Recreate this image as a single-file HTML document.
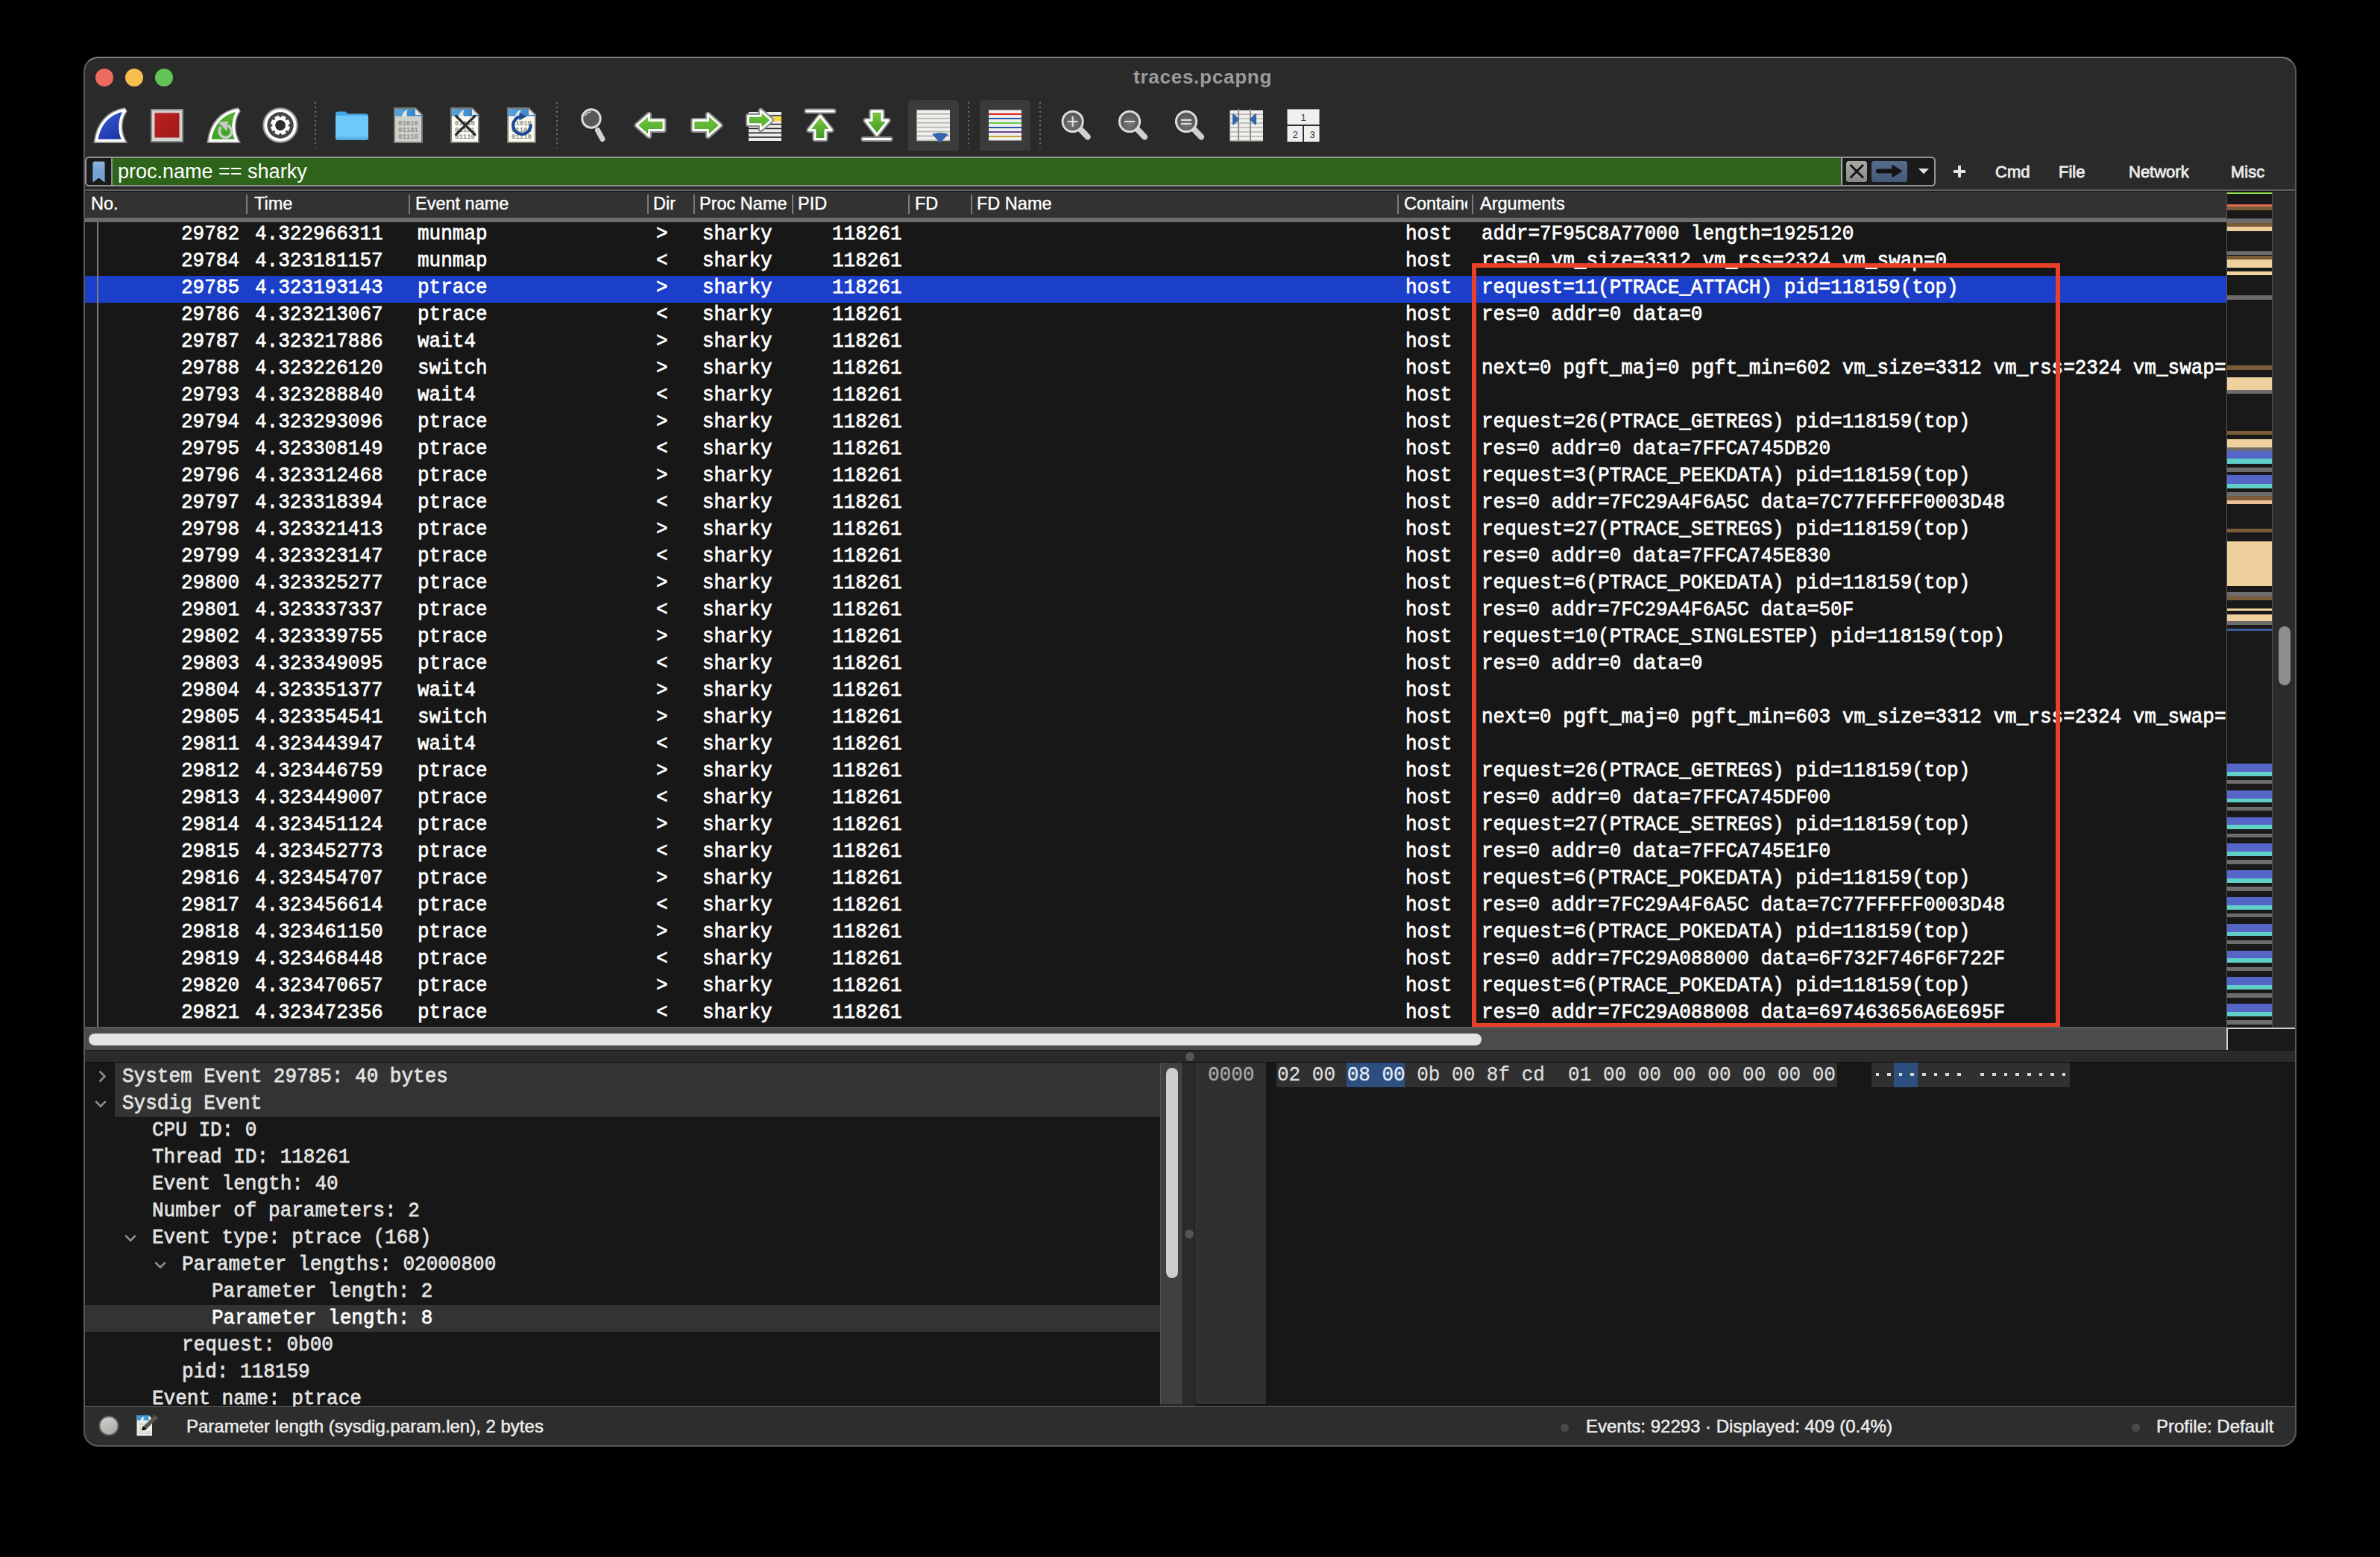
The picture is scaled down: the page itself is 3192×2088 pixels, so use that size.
<!DOCTYPE html><html><head><meta charset="utf-8"><title>traces.pcapng</title><style>
*{margin:0;padding:0;box-sizing:border-box}
html,body{width:3192px;height:2088px;background:#000;overflow:hidden}
body{position:relative;font-family:"Liberation Sans", sans-serif}
.a{position:absolute}
.m{position:absolute;font-family:"Liberation Mono", monospace;font-size:26px;line-height:36px;white-space:pre;color:#fff;transform:scaleY(1.08);transform-origin:0 24.9px;-webkit-text-stroke:0.7px}
.s{position:absolute;font-family:"Liberation Sans", sans-serif;white-space:pre}
.hd{position:absolute;font-family:"Liberation Sans", sans-serif;font-size:23.5px;line-height:34px;color:#fff;white-space:pre;top:256px;-webkit-text-stroke:0.4px}
.sep{position:absolute;width:2px;top:261px;height:26px;background:#7c7c7c}
</style></head><body>
<div class="a" style="left:0;top:0;width:3192px;height:2088px;clip-path:inset(76px 112px 148px 112px round 20px);background:#2a2a2a">
<div class="a" style="left:128px;top:92px;width:24px;height:24px;border-radius:50%;background:#ee6a5f"></div>
<div class="a" style="left:168px;top:92px;width:24px;height:24px;border-radius:50%;background:#f5be4f"></div>
<div class="a" style="left:208px;top:92px;width:24px;height:24px;border-radius:50%;background:#61c454"></div>
<div class="s" style="left:1520px;top:87px;font-size:26px;line-height:32px;font-weight:bold;color:#9b9b9b;letter-spacing:0.75px">traces.pcapng</div>
<svg class="a" style="left:0;top:0" width="3192" height="260" viewBox="0 0 3192 260"><defs>
<linearGradient id="blu" x1="0" y1="0" x2="0.6" y2="1"><stop offset="0" stop-color="#6680e6"/><stop offset="0.45" stop-color="#2f4cc4"/><stop offset="1" stop-color="#1c36a8"/></linearGradient>
<linearGradient id="grnfin" x1="0" y1="0" x2="0.3" y2="1"><stop offset="0" stop-color="#5dbb3a"/><stop offset="1" stop-color="#3f9f24"/></linearGradient>
<linearGradient id="red" x1="0" y1="0" x2="1" y2="1"><stop offset="0" stop-color="#b92226"/><stop offset="1" stop-color="#a31a14"/></linearGradient>
<linearGradient id="grn" x1="0" y1="0" x2="0" y2="1"><stop offset="0" stop-color="#78c544"/><stop offset="1" stop-color="#4aa82a"/></linearGradient>
<linearGradient id="grnv" x1="0" y1="0" x2="0" y2="1"><stop offset="0" stop-color="#7cc646"/><stop offset="1" stop-color="#3f9a22"/></linearGradient>
<linearGradient id="docblue" x1="0" y1="0" x2="1" y2="0"><stop offset="0" stop-color="#5aa6dc"/><stop offset="1" stop-color="#3a86c8"/></linearGradient>
<radialGradient id="glass" cx="0.5" cy="0.6" r="0.6"><stop offset="0" stop-color="#7a7a7a"/><stop offset="1" stop-color="#4e4e4e"/></radialGradient>
<linearGradient id="xbtn" x1="0" y1="0" x2="0" y2="1"><stop offset="0" stop-color="#aaaba5"/><stop offset="1" stop-color="#8a8b86"/></linearGradient>
<linearGradient id="gobtn" x1="0" y1="0" x2="0" y2="1"><stop offset="0" stop-color="#566c8c"/><stop offset="1" stop-color="#45597a"/></linearGradient>
</defs><path d="M129.5,188.5 C132,168 145,151 168,147.5 C160,158.5 158.5,175 165.5,188.5 Z" fill="none" stroke="#8f8f8f" stroke-width="7" stroke-linejoin="miter" stroke-miterlimit="2.2"/><path d="M129.5,188.5 C132,168 145,151 168,147.5 C160,158.5 158.5,175 165.5,188.5 Z" fill="url(#blu)" stroke="#fff" stroke-width="3.6" stroke-linejoin="miter" stroke-miterlimit="2.2"/><rect x="202" y="146" width="44" height="45" fill="#8a8a8a"/><rect x="204" y="148" width="40" height="41" fill="#d2d2d2"/><rect x="207.5" y="151.5" width="33" height="33" fill="url(#red)"/><path d="M281.5,188.5 C284,168 297,151 320,147.5 C312,158.5 310.5,175 317.5,188.5 Z" fill="none" stroke="#8f8f8f" stroke-width="7" stroke-linejoin="miter" stroke-miterlimit="2.2"/><path d="M281.5,188.5 C284,168 297,151 320,147.5 C312,158.5 310.5,175 317.5,188.5 Z" fill="url(#grnfin)" stroke="#fff" stroke-width="3.6" stroke-linejoin="miter" stroke-miterlimit="2.2"/><path d="M296.5,170.5 A8.2,8.2 0 1 0 305.5,168.5" fill="none" stroke="#c9c9c9" stroke-width="3.8"/><path d="M293,164 L306,162.5 L304,176 Z" fill="#c9c9c9"/><circle cx="376" cy="168" r="23.8" fill="#9a9a9a"/><circle cx="376" cy="168" r="21.6" fill="#ffffff"/><circle cx="376" cy="168" r="17.7" fill="#454545"/><path d="M376.94,157.84 L378.47,155.34 L383.21,157.30 L382.51,160.15 L383.26,160.84 L383.88,161.52 L383.85,161.49 L386.70,160.79 L388.66,165.53 L386.16,167.06 L386.20,168.07 L386.15,168.99 L386.16,168.94 L388.66,170.47 L386.70,175.21 L383.85,174.51 L383.16,175.26 L382.48,175.88 L382.51,175.85 L383.21,178.70 L378.47,180.66 L376.94,178.16 L375.93,178.20 L375.01,178.15 L375.06,178.16 L373.53,180.66 L368.79,178.70 L369.49,175.85 L368.74,175.16 L368.12,174.48 L368.15,174.51 L365.30,175.21 L363.34,170.47 L365.84,168.94 L365.80,167.93 L365.85,167.01 L365.84,167.06 L363.34,165.53 L365.30,160.79 L368.15,161.49 L368.84,160.74 L369.52,160.12 L369.49,160.15 L368.79,157.30 L373.53,155.34 L375.06,157.84 L376.07,157.80 L376.99,157.85 Z" fill="#fff" stroke="#fff" stroke-width="0.8" stroke-linejoin="round"/><circle cx="376" cy="168" r="6.9" fill="#2c2c2c"/><line x1="423" y1="137" x2="423" y2="198" stroke="#6a6a6a" stroke-width="2.2" stroke-dasharray="2.2 3.8"/><line x1="747" y1="137" x2="747" y2="198" stroke="#6a6a6a" stroke-width="2.2" stroke-dasharray="2.2 3.8"/><line x1="1299" y1="137" x2="1299" y2="198" stroke="#6a6a6a" stroke-width="2.2" stroke-dasharray="2.2 3.8"/><line x1="1395" y1="137" x2="1395" y2="198" stroke="#6a6a6a" stroke-width="2.2" stroke-dasharray="2.2 3.8"/><path d="M450,156 L450,152.5 Q450,149.5 453.5,149.5 L462,149.5 Q464,149.5 465.5,151.5 L466.5,152.5 L490.5,152.5 Q494,152.5 494,156 L494,162 L450,162 Z" fill="#47a4e6"/><rect x="450" y="155" width="44" height="32.5" rx="3" fill="#6fc8fa"/><rect x="450" y="183.5" width="44" height="4" rx="2" fill="#5bb4ea"/><path d="M529,145 L557,145 L566,154 L566,191 L529,191 Z" fill="#d0d0cb" stroke="#7a7a76" stroke-width="2"/><rect x="530" y="146" width="27" height="10" fill="url(#docblue)"/><path d="M557,146 L565,154 L565,156 L557,156 Z" fill="url(#docblue)"/><path d="M557,146 L557,154 L565,154 Z" fill="#e8e8e0"/><path d="M539,156 C540,151 543,148 547,147 C545,150 545,153 546,156 Z" fill="#e6e6e6"/><text x="547.5" y="167.5" font-family="Liberation Mono" font-size="9" font-weight="bold" fill="#8f8f8a" text-anchor="middle">01010</text><text x="547.5" y="176.5" font-family="Liberation Mono" font-size="9" font-weight="bold" fill="#8f8f8a" text-anchor="middle">01101</text><text x="547.5" y="185.5" font-family="Liberation Mono" font-size="9" font-weight="bold" fill="#8f8f8a" text-anchor="middle">01110</text><path d="M605,145 L633,145 L642,154 L642,191 L605,191 Z" fill="#fbfbef" stroke="#7a7a76" stroke-width="2"/><rect x="606" y="146" width="27" height="10" fill="url(#docblue)"/><path d="M633,146 L641,154 L641,156 L633,156 Z" fill="url(#docblue)"/><path d="M633,146 L633,154 L641,154 Z" fill="#e8e8e0"/><path d="M615,156 C616,151 619,148 623,147 C621,150 621,153 622,156 Z" fill="#e6e6e6"/><text x="623.5" y="167.5" font-family="Liberation Mono" font-size="9" font-weight="bold" fill="#8f8f8a" text-anchor="middle">01010</text><text x="623.5" y="176.5" font-family="Liberation Mono" font-size="9" font-weight="bold" fill="#8f8f8a" text-anchor="middle">01101</text><text x="623.5" y="185.5" font-family="Liberation Mono" font-size="9" font-weight="bold" fill="#8f8f8a" text-anchor="middle">01110</text><path d="M611.5,155.5 L637,180.5 M637,155.5 L611.5,180.5" stroke="#2b2d30" stroke-width="3.2" stroke-linecap="round"/><path d="M681,145 L709,145 L718,154 L718,191 L681,191 Z" fill="#fbfbef" stroke="#7a7a76" stroke-width="2"/><rect x="682" y="146" width="27" height="10" fill="url(#docblue)"/><path d="M709,146 L717,154 L717,156 L709,156 Z" fill="url(#docblue)"/><path d="M709,146 L709,154 L717,154 Z" fill="#e8e8e0"/><path d="M691,156 C692,151 695,148 699,147 C697,150 697,153 698,156 Z" fill="#e6e6e6"/><text x="699.5" y="167.5" font-family="Liberation Mono" font-size="9" font-weight="bold" fill="#8f8f8a" text-anchor="middle">01010</text><text x="699.5" y="176.5" font-family="Liberation Mono" font-size="9" font-weight="bold" fill="#8f8f8a" text-anchor="middle">01101</text><text x="699.5" y="185.5" font-family="Liberation Mono" font-size="9" font-weight="bold" fill="#8f8f8a" text-anchor="middle">01110</text><path d="M698,156.4 A11.8,11.8 0 1 0 711.7,166.6" fill="none" stroke="#1c4a94" stroke-width="4.2"/><path d="M696.5,151 L706.5,156 L696.5,161.5 Z" fill="#1c4a94"/><line x1="801.5" y1="174.5" x2="808" y2="186.5" stroke="#d2d2d2" stroke-width="7" stroke-linecap="round"/><circle cx="793" cy="159" r="12.2" fill="#585858" stroke="#dcdcdc" stroke-width="3"/><path d="M785,155 Q787,150.5 792,150" fill="none" stroke="#d8d8d8" stroke-width="1.6" stroke-linecap="round"/><path d="M854,168 L870.5,153.5 L870.5,161.5 L890,161.5 L890,174.5 L870.5,174.5 L870.5,182.5 Z" fill="none" stroke="#8d8d8d" stroke-width="7" stroke-linejoin="round"/><path d="M854,168 L870.5,153.5 L870.5,161.5 L890,161.5 L890,174.5 L870.5,174.5 L870.5,182.5 Z" fill="url(#grn)" stroke="#fff" stroke-width="2.8" stroke-linejoin="round"/><path d="M966.0,168.0 L949.5,153.5 L949.5,161.5 L930.0,161.5 L930.0,174.5 L949.5,174.5 L949.5,182.5 Z" fill="none" stroke="#8d8d8d" stroke-width="7" stroke-linejoin="round"/><path d="M966.0,168.0 L949.5,153.5 L949.5,161.5 L930.0,161.5 L930.0,174.5 L949.5,174.5 L949.5,182.5 Z" fill="url(#grn)" stroke="#fff" stroke-width="2.8" stroke-linejoin="round"/><rect x="1004" y="149.5" width="44" height="40.5" fill="#202428"/><rect x="1004" y="150.0" width="44" height="4.2" fill="#ececea"/><rect x="1004" y="155.8" width="44" height="4.2" fill="#ececea"/><rect x="1004" y="161.6" width="44" height="4.2" fill="#ececea"/><rect x="1004" y="167.4" width="44" height="4.2" fill="#ececea"/><rect x="1004" y="173.2" width="44" height="4.2" fill="#ececea"/><rect x="1004" y="179.0" width="44" height="4.2" fill="#ececea"/><rect x="1004" y="184.8" width="44" height="4.2" fill="#ececea"/><rect x="1030" y="156.5" width="18" height="6" fill="#f5d83a"/><path d="M1034.5,161.0 L1020.3,148.5 L1020.3,155.4 L1003.5,155.4 L1003.5,166.6 L1020.3,166.6 L1020.3,173.5 Z" fill="none" stroke="#8d8d8d" stroke-width="7" stroke-linejoin="round"/><path d="M1034.5,161.0 L1020.3,148.5 L1020.3,155.4 L1003.5,155.4 L1003.5,166.6 L1020.3,166.6 L1020.3,173.5 Z" fill="url(#grn)" stroke="#fff" stroke-width="2.8" stroke-linejoin="round"/><rect x="1079.5" y="146.5" width="41" height="5" rx="2.5" fill="#fff" stroke="#8d8d8d" stroke-width="2"/><path d="M1100,155.5 L1115,174.5 L1107,174.5 L1107,186.5 L1093,186.5 L1093,174.5 L1085,174.5 Z" fill="none" stroke="#8d8d8d" stroke-width="7" stroke-linejoin="round"/><path d="M1100,155.5 L1115,174.5 L1107,174.5 L1107,186.5 L1093,186.5 L1093,174.5 L1085,174.5 Z" fill="url(#grnv)" stroke="#fff" stroke-width="3" stroke-linejoin="round"/><rect x="1155.5" y="184" width="41" height="5" rx="2.5" fill="#fff" stroke="#8d8d8d" stroke-width="2"/><path d="M1176,180.5 L1191,161.5 L1183,161.5 L1183,149.5 L1169,149.5 L1169,161.5 L1161,161.5 Z" fill="none" stroke="#8d8d8d" stroke-width="7" stroke-linejoin="round"/><path d="M1176,180.5 L1191,161.5 L1183,161.5 L1183,149.5 L1169,149.5 L1169,161.5 L1161,161.5 Z" fill="url(#grnv)" stroke="#fff" stroke-width="3" stroke-linejoin="round"/><path d="M1218,202 L1218,141 Q1218,134 1225,134 L1279,134 Q1286,134 1286,141 L1286,202 Z" fill="#3b3b3b"/><rect x="1229.5" y="147" width="44.5" height="42" fill="#1a1f24"/><rect x="1229.5" y="147.5" width="44.5" height="41" fill="#efefed"/><rect x="1229.5" y="152.0" width="44.5" height="1.8" fill="#b8b8b0"/><rect x="1229.5" y="157.9" width="44.5" height="1.8" fill="#b8b8b0"/><rect x="1229.5" y="163.8" width="44.5" height="1.8" fill="#b8b8b0"/><rect x="1229.5" y="169.7" width="44.5" height="1.8" fill="#b8b8b0"/><rect x="1229.5" y="175.6" width="44.5" height="1.8" fill="#b8b8b0"/><rect x="1229.5" y="181.5" width="44.5" height="1.8" fill="#b8b8b0"/><rect x="1229.5" y="187.4" width="44.5" height="1.8" fill="#b8b8b0"/><path d="M1250,180 Q1261,176 1272,180 L1262,190.5 Q1261,191.5 1260,190.5 Z" fill="#3565aa"/><path d="M1314,202 L1314,141 Q1314,134 1321,134 L1375,134 Q1382,134 1382,141 L1382,202 Z" fill="#3b3b3b"/><rect x="1326" y="147" width="44" height="42" fill="#1a1f24"/><rect x="1326" y="147.5" width="44" height="41" fill="#efefed"/><rect x="1326" y="152.0" width="44" height="2" fill="#e02424"/><rect x="1326" y="158.0" width="44" height="2" fill="#2a58a8"/><rect x="1326" y="164.0" width="44" height="2" fill="#66cc44"/><rect x="1326" y="170.0" width="44" height="2" fill="#2a58a8"/><rect x="1326" y="176.0" width="44" height="2" fill="#6a3d8c"/><rect x="1326" y="182.0" width="44" height="2" fill="#caa034"/><line x1="1448.7" y1="173" x2="1458.7" y2="183.5" stroke="#cfcfcf" stroke-width="8" stroke-linecap="round"/><circle cx="1438.7" cy="163" r="13.6" fill="url(#glass)" stroke="#dadada" stroke-width="3"/><path d="M1431.7,163 H1445.7 M1438.7,156 V170" stroke="#e2e2e2" stroke-width="2"/><line x1="1525" y1="173" x2="1535" y2="183.5" stroke="#cfcfcf" stroke-width="8" stroke-linecap="round"/><circle cx="1515" cy="163" r="13.6" fill="url(#glass)" stroke="#dadada" stroke-width="3"/><path d="M1508,163 H1522" stroke="#e2e2e2" stroke-width="2.2"/><line x1="1601" y1="173" x2="1611" y2="183.5" stroke="#cfcfcf" stroke-width="8" stroke-linecap="round"/><circle cx="1591" cy="163" r="13.6" fill="url(#glass)" stroke="#dadada" stroke-width="3"/><path d="M1584,161 H1598 M1584,166 H1598" stroke="#e2e2e2" stroke-width="2"/><rect x="1649.5" y="148" width="44.5" height="40.5" fill="#efefed"/><rect x="1649.5" y="152.5" width="44.5" height="1.6" fill="#b8b8b0"/><rect x="1649.5" y="158.4" width="44.5" height="1.6" fill="#b8b8b0"/><rect x="1649.5" y="164.3" width="44.5" height="1.6" fill="#b8b8b0"/><rect x="1649.5" y="170.2" width="44.5" height="1.6" fill="#b8b8b0"/><rect x="1649.5" y="176.1" width="44.5" height="1.6" fill="#b8b8b0"/><rect x="1649.5" y="182.0" width="44.5" height="1.6" fill="#b8b8b0"/><rect x="1649.5" y="187.9" width="44.5" height="1.6" fill="#b8b8b0"/><rect x="1660" y="146" width="2" height="44" fill="#8a8a84"/><rect x="1676" y="146" width="2" height="44" fill="#8a8a84"/><path d="M1654,153.5 L1661,160 L1654,166.5 Z" fill="#3565aa" stroke="#3565aa" stroke-width="2" stroke-linejoin="round"/><path d="M1684,153.5 L1677,160 L1684,166.5 Z" fill="#3565aa" stroke="#3565aa" stroke-width="2" stroke-linejoin="round"/><rect x="1725.5" y="145.5" width="45" height="45" fill="#2a3036"/><rect x="1726.5" y="146.5" width="43" height="20.5" fill="#f0f0ee"/><rect x="1726.5" y="169" width="20.5" height="21" fill="#f0f0ee"/><rect x="1749" y="169" width="20.5" height="21" fill="#f0f0ee"/><text x="1748" y="162" font-family="Liberation Sans" font-size="13" fill="#333" text-anchor="middle">1</text><text x="1737" y="185" font-family="Liberation Sans" font-size="13" fill="#333" text-anchor="middle">2</text><text x="1760" y="185" font-family="Liberation Sans" font-size="13" fill="#333" text-anchor="middle">3</text><rect x="115" y="211" width="2480" height="38" rx="4.5" fill="#1a1a1a" stroke="#939393" stroke-width="2"/><rect x="151" y="212" width="2318" height="36" fill="#2d6419"/><rect x="149" y="212" width="2" height="36" fill="#8c8c94"/><rect x="2469" y="212" width="2" height="36" fill="#a8a8b0"/><linearGradient id="bmk" x1="0" y1="0" x2="0" y2="1"><stop offset="0" stop-color="#8db5df"/><stop offset="0.5" stop-color="#74a1d3"/><stop offset="1" stop-color="#72a0d4"/></linearGradient><path d="M125,218.5 Q125,217 126.5,217 L138.5,217 Q140,217 140,218.5 L140,243.5 L132.5,237.5 L125,243.5 Z" fill="url(#bmk)" stroke="#7eaadb" stroke-width="1.2" stroke-linejoin="round"/><rect x="2476" y="216" width="28" height="28" rx="3.5" fill="url(#xbtn)"/><path d="M2481.5,221 L2499,238.5 M2499,221 L2481.5,238.5" stroke="#111" stroke-width="2.8"/><rect x="2510" y="216" width="48" height="28" rx="3.5" fill="url(#gobtn)"/><path d="M2519,229.5 L2540,229.5" stroke="#141414" stroke-width="6" stroke-linecap="round"/><path d="M2538.5,222.5 L2549.5,229.5 L2538.5,236.5 Z" fill="#141414" stroke="#141414" stroke-width="2.5" stroke-linejoin="round"/><path d="M2573,226 L2587,226 L2580,233.3 Z" fill="#e0e2dc"/><path d="M2620,230 H2636 M2628,222 V238" stroke="#e4e4e4" stroke-width="4"/><rect x="112" y="254" width="2967" height="2" fill="#5e5e5e"/><rect x="112" y="256" width="2967" height="1.2" fill="#1a1a1a"/></svg>
<div class="s" style="left:158px;top:213px;font-size:27px;line-height:34px;color:#fff">proc.name == sharky</div>
<div class="s" style="left:2676px;top:215.5px;font-size:22px;line-height:30px;color:#ececec;-webkit-text-stroke:0.8px">Cmd</div>
<div class="s" style="left:2761px;top:215.5px;font-size:22px;line-height:30px;color:#ececec;-webkit-text-stroke:0.8px">File</div>
<div class="s" style="left:2855px;top:215.5px;font-size:22px;line-height:30px;color:#ececec;-webkit-text-stroke:0.8px">Network</div>
<div class="s" style="left:2992px;top:215.5px;font-size:22px;line-height:30px;color:#ececec;-webkit-text-stroke:0.8px">Misc</div>
<div class="a" style="left:112px;top:257px;width:2874px;height:34.5px;background:#323232"></div>
<div class="a" style="left:112px;top:291.5px;width:2874px;height:1px;background:#202020"></div>
<div class="a" style="left:112px;top:292px;width:2874px;height:6px;background:#6c6c6c"></div>
<div class="sep" style="left:330px"></div>
<div class="sep" style="left:548px"></div>
<div class="sep" style="left:868px"></div>
<div class="sep" style="left:930px"></div>
<div class="sep" style="left:1062px"></div>
<div class="sep" style="left:1218px"></div>
<div class="sep" style="left:1302px"></div>
<div class="sep" style="left:1874px"></div>
<div class="sep" style="left:1974px"></div>
<div class="hd" style="left:122px">No.</div>
<div class="hd" style="left:341px">Time</div>
<div class="hd" style="left:557px">Event name</div>
<div class="hd" style="left:876px">Dir</div>
<div class="hd" style="left:938px">Proc Name</div>
<div class="hd" style="left:1070px">PID</div>
<div class="hd" style="left:1227px">FD</div>
<div class="hd" style="left:1310px">FD Name</div>
<div class="hd" style="left:1985px">Arguments</div>
<div class="hd" style="left:1883px;width:85px;overflow:hidden">Container</div>
<div class="a" style="left:112px;top:298px;width:2874px;height:1080px;background:#171717;overflow:hidden">
<div class="a" style="left:0;top:72px;width:2874px;height:36px;background:#1c3fca"></div>
<div class="a" style="left:18px;top:-6px;width:2px;height:1090px;background:#7c7c7c"></div>
<div class="m" style="left:131px;top:-2px">29782</div>
<div class="m" style="left:230px;top:-2px">4.322966311</div>
<div class="m" style="left:448px;top:-2px">munmap</div>
<div class="m" style="left:768px;top:-2px">&gt;</div>
<div class="m" style="left:830px;top:-2px">sharky</div>
<div class="m" style="left:1004px;top:-2px">118261</div>
<div class="m" style="left:1773px;top:-2px">host</div>
<div class="m" style="left:1875px;top:-2px">addr=7F95C8A77000 length=1925120</div>
<div class="m" style="left:131px;top:34px">29784</div>
<div class="m" style="left:230px;top:34px">4.323181157</div>
<div class="m" style="left:448px;top:34px">munmap</div>
<div class="m" style="left:768px;top:34px">&lt;</div>
<div class="m" style="left:830px;top:34px">sharky</div>
<div class="m" style="left:1004px;top:34px">118261</div>
<div class="m" style="left:1773px;top:34px">host</div>
<div class="m" style="left:1875px;top:34px">res=0 vm_size=3312 vm_rss=2324 vm_swap=0</div>
<div class="m" style="left:131px;top:70px">29785</div>
<div class="m" style="left:230px;top:70px">4.323193143</div>
<div class="m" style="left:448px;top:70px">ptrace</div>
<div class="m" style="left:768px;top:70px">&gt;</div>
<div class="m" style="left:830px;top:70px">sharky</div>
<div class="m" style="left:1004px;top:70px">118261</div>
<div class="m" style="left:1773px;top:70px">host</div>
<div class="m" style="left:1875px;top:70px">request=11(PTRACE_ATTACH) pid=118159(top)</div>
<div class="m" style="left:131px;top:106px">29786</div>
<div class="m" style="left:230px;top:106px">4.323213067</div>
<div class="m" style="left:448px;top:106px">ptrace</div>
<div class="m" style="left:768px;top:106px">&lt;</div>
<div class="m" style="left:830px;top:106px">sharky</div>
<div class="m" style="left:1004px;top:106px">118261</div>
<div class="m" style="left:1773px;top:106px">host</div>
<div class="m" style="left:1875px;top:106px">res=0 addr=0 data=0</div>
<div class="m" style="left:131px;top:142px">29787</div>
<div class="m" style="left:230px;top:142px">4.323217886</div>
<div class="m" style="left:448px;top:142px">wait4</div>
<div class="m" style="left:768px;top:142px">&gt;</div>
<div class="m" style="left:830px;top:142px">sharky</div>
<div class="m" style="left:1004px;top:142px">118261</div>
<div class="m" style="left:1773px;top:142px">host</div>
<div class="m" style="left:131px;top:178px">29788</div>
<div class="m" style="left:230px;top:178px">4.323226120</div>
<div class="m" style="left:448px;top:178px">switch</div>
<div class="m" style="left:768px;top:178px">&gt;</div>
<div class="m" style="left:830px;top:178px">sharky</div>
<div class="m" style="left:1004px;top:178px">118261</div>
<div class="m" style="left:1773px;top:178px">host</div>
<div class="m" style="left:1875px;top:178px">next=0 pgft_maj=0 pgft_min=602 vm_size=3312 vm_rss=2324 vm_swap=</div>
<div class="m" style="left:131px;top:214px">29793</div>
<div class="m" style="left:230px;top:214px">4.323288840</div>
<div class="m" style="left:448px;top:214px">wait4</div>
<div class="m" style="left:768px;top:214px">&lt;</div>
<div class="m" style="left:830px;top:214px">sharky</div>
<div class="m" style="left:1004px;top:214px">118261</div>
<div class="m" style="left:1773px;top:214px">host</div>
<div class="m" style="left:131px;top:250px">29794</div>
<div class="m" style="left:230px;top:250px">4.323293096</div>
<div class="m" style="left:448px;top:250px">ptrace</div>
<div class="m" style="left:768px;top:250px">&gt;</div>
<div class="m" style="left:830px;top:250px">sharky</div>
<div class="m" style="left:1004px;top:250px">118261</div>
<div class="m" style="left:1773px;top:250px">host</div>
<div class="m" style="left:1875px;top:250px">request=26(PTRACE_GETREGS) pid=118159(top)</div>
<div class="m" style="left:131px;top:286px">29795</div>
<div class="m" style="left:230px;top:286px">4.323308149</div>
<div class="m" style="left:448px;top:286px">ptrace</div>
<div class="m" style="left:768px;top:286px">&lt;</div>
<div class="m" style="left:830px;top:286px">sharky</div>
<div class="m" style="left:1004px;top:286px">118261</div>
<div class="m" style="left:1773px;top:286px">host</div>
<div class="m" style="left:1875px;top:286px">res=0 addr=0 data=7FFCA745DB20</div>
<div class="m" style="left:131px;top:322px">29796</div>
<div class="m" style="left:230px;top:322px">4.323312468</div>
<div class="m" style="left:448px;top:322px">ptrace</div>
<div class="m" style="left:768px;top:322px">&gt;</div>
<div class="m" style="left:830px;top:322px">sharky</div>
<div class="m" style="left:1004px;top:322px">118261</div>
<div class="m" style="left:1773px;top:322px">host</div>
<div class="m" style="left:1875px;top:322px">request=3(PTRACE_PEEKDATA) pid=118159(top)</div>
<div class="m" style="left:131px;top:358px">29797</div>
<div class="m" style="left:230px;top:358px">4.323318394</div>
<div class="m" style="left:448px;top:358px">ptrace</div>
<div class="m" style="left:768px;top:358px">&lt;</div>
<div class="m" style="left:830px;top:358px">sharky</div>
<div class="m" style="left:1004px;top:358px">118261</div>
<div class="m" style="left:1773px;top:358px">host</div>
<div class="m" style="left:1875px;top:358px">res=0 addr=7FC29A4F6A5C data=7C77FFFFF0003D48</div>
<div class="m" style="left:131px;top:394px">29798</div>
<div class="m" style="left:230px;top:394px">4.323321413</div>
<div class="m" style="left:448px;top:394px">ptrace</div>
<div class="m" style="left:768px;top:394px">&gt;</div>
<div class="m" style="left:830px;top:394px">sharky</div>
<div class="m" style="left:1004px;top:394px">118261</div>
<div class="m" style="left:1773px;top:394px">host</div>
<div class="m" style="left:1875px;top:394px">request=27(PTRACE_SETREGS) pid=118159(top)</div>
<div class="m" style="left:131px;top:430px">29799</div>
<div class="m" style="left:230px;top:430px">4.323323147</div>
<div class="m" style="left:448px;top:430px">ptrace</div>
<div class="m" style="left:768px;top:430px">&lt;</div>
<div class="m" style="left:830px;top:430px">sharky</div>
<div class="m" style="left:1004px;top:430px">118261</div>
<div class="m" style="left:1773px;top:430px">host</div>
<div class="m" style="left:1875px;top:430px">res=0 addr=0 data=7FFCA745E830</div>
<div class="m" style="left:131px;top:466px">29800</div>
<div class="m" style="left:230px;top:466px">4.323325277</div>
<div class="m" style="left:448px;top:466px">ptrace</div>
<div class="m" style="left:768px;top:466px">&gt;</div>
<div class="m" style="left:830px;top:466px">sharky</div>
<div class="m" style="left:1004px;top:466px">118261</div>
<div class="m" style="left:1773px;top:466px">host</div>
<div class="m" style="left:1875px;top:466px">request=6(PTRACE_POKEDATA) pid=118159(top)</div>
<div class="m" style="left:131px;top:502px">29801</div>
<div class="m" style="left:230px;top:502px">4.323337337</div>
<div class="m" style="left:448px;top:502px">ptrace</div>
<div class="m" style="left:768px;top:502px">&lt;</div>
<div class="m" style="left:830px;top:502px">sharky</div>
<div class="m" style="left:1004px;top:502px">118261</div>
<div class="m" style="left:1773px;top:502px">host</div>
<div class="m" style="left:1875px;top:502px">res=0 addr=7FC29A4F6A5C data=50F</div>
<div class="m" style="left:131px;top:538px">29802</div>
<div class="m" style="left:230px;top:538px">4.323339755</div>
<div class="m" style="left:448px;top:538px">ptrace</div>
<div class="m" style="left:768px;top:538px">&gt;</div>
<div class="m" style="left:830px;top:538px">sharky</div>
<div class="m" style="left:1004px;top:538px">118261</div>
<div class="m" style="left:1773px;top:538px">host</div>
<div class="m" style="left:1875px;top:538px">request=10(PTRACE_SINGLESTEP) pid=118159(top)</div>
<div class="m" style="left:131px;top:574px">29803</div>
<div class="m" style="left:230px;top:574px">4.323349095</div>
<div class="m" style="left:448px;top:574px">ptrace</div>
<div class="m" style="left:768px;top:574px">&lt;</div>
<div class="m" style="left:830px;top:574px">sharky</div>
<div class="m" style="left:1004px;top:574px">118261</div>
<div class="m" style="left:1773px;top:574px">host</div>
<div class="m" style="left:1875px;top:574px">res=0 addr=0 data=0</div>
<div class="m" style="left:131px;top:610px">29804</div>
<div class="m" style="left:230px;top:610px">4.323351377</div>
<div class="m" style="left:448px;top:610px">wait4</div>
<div class="m" style="left:768px;top:610px">&gt;</div>
<div class="m" style="left:830px;top:610px">sharky</div>
<div class="m" style="left:1004px;top:610px">118261</div>
<div class="m" style="left:1773px;top:610px">host</div>
<div class="m" style="left:131px;top:646px">29805</div>
<div class="m" style="left:230px;top:646px">4.323354541</div>
<div class="m" style="left:448px;top:646px">switch</div>
<div class="m" style="left:768px;top:646px">&gt;</div>
<div class="m" style="left:830px;top:646px">sharky</div>
<div class="m" style="left:1004px;top:646px">118261</div>
<div class="m" style="left:1773px;top:646px">host</div>
<div class="m" style="left:1875px;top:646px">next=0 pgft_maj=0 pgft_min=603 vm_size=3312 vm_rss=2324 vm_swap=</div>
<div class="m" style="left:131px;top:682px">29811</div>
<div class="m" style="left:230px;top:682px">4.323443947</div>
<div class="m" style="left:448px;top:682px">wait4</div>
<div class="m" style="left:768px;top:682px">&lt;</div>
<div class="m" style="left:830px;top:682px">sharky</div>
<div class="m" style="left:1004px;top:682px">118261</div>
<div class="m" style="left:1773px;top:682px">host</div>
<div class="m" style="left:131px;top:718px">29812</div>
<div class="m" style="left:230px;top:718px">4.323446759</div>
<div class="m" style="left:448px;top:718px">ptrace</div>
<div class="m" style="left:768px;top:718px">&gt;</div>
<div class="m" style="left:830px;top:718px">sharky</div>
<div class="m" style="left:1004px;top:718px">118261</div>
<div class="m" style="left:1773px;top:718px">host</div>
<div class="m" style="left:1875px;top:718px">request=26(PTRACE_GETREGS) pid=118159(top)</div>
<div class="m" style="left:131px;top:754px">29813</div>
<div class="m" style="left:230px;top:754px">4.323449007</div>
<div class="m" style="left:448px;top:754px">ptrace</div>
<div class="m" style="left:768px;top:754px">&lt;</div>
<div class="m" style="left:830px;top:754px">sharky</div>
<div class="m" style="left:1004px;top:754px">118261</div>
<div class="m" style="left:1773px;top:754px">host</div>
<div class="m" style="left:1875px;top:754px">res=0 addr=0 data=7FFCA745DF00</div>
<div class="m" style="left:131px;top:790px">29814</div>
<div class="m" style="left:230px;top:790px">4.323451124</div>
<div class="m" style="left:448px;top:790px">ptrace</div>
<div class="m" style="left:768px;top:790px">&gt;</div>
<div class="m" style="left:830px;top:790px">sharky</div>
<div class="m" style="left:1004px;top:790px">118261</div>
<div class="m" style="left:1773px;top:790px">host</div>
<div class="m" style="left:1875px;top:790px">request=27(PTRACE_SETREGS) pid=118159(top)</div>
<div class="m" style="left:131px;top:826px">29815</div>
<div class="m" style="left:230px;top:826px">4.323452773</div>
<div class="m" style="left:448px;top:826px">ptrace</div>
<div class="m" style="left:768px;top:826px">&lt;</div>
<div class="m" style="left:830px;top:826px">sharky</div>
<div class="m" style="left:1004px;top:826px">118261</div>
<div class="m" style="left:1773px;top:826px">host</div>
<div class="m" style="left:1875px;top:826px">res=0 addr=0 data=7FFCA745E1F0</div>
<div class="m" style="left:131px;top:862px">29816</div>
<div class="m" style="left:230px;top:862px">4.323454707</div>
<div class="m" style="left:448px;top:862px">ptrace</div>
<div class="m" style="left:768px;top:862px">&gt;</div>
<div class="m" style="left:830px;top:862px">sharky</div>
<div class="m" style="left:1004px;top:862px">118261</div>
<div class="m" style="left:1773px;top:862px">host</div>
<div class="m" style="left:1875px;top:862px">request=6(PTRACE_POKEDATA) pid=118159(top)</div>
<div class="m" style="left:131px;top:898px">29817</div>
<div class="m" style="left:230px;top:898px">4.323456614</div>
<div class="m" style="left:448px;top:898px">ptrace</div>
<div class="m" style="left:768px;top:898px">&lt;</div>
<div class="m" style="left:830px;top:898px">sharky</div>
<div class="m" style="left:1004px;top:898px">118261</div>
<div class="m" style="left:1773px;top:898px">host</div>
<div class="m" style="left:1875px;top:898px">res=0 addr=7FC29A4F6A5C data=7C77FFFFF0003D48</div>
<div class="m" style="left:131px;top:934px">29818</div>
<div class="m" style="left:230px;top:934px">4.323461150</div>
<div class="m" style="left:448px;top:934px">ptrace</div>
<div class="m" style="left:768px;top:934px">&gt;</div>
<div class="m" style="left:830px;top:934px">sharky</div>
<div class="m" style="left:1004px;top:934px">118261</div>
<div class="m" style="left:1773px;top:934px">host</div>
<div class="m" style="left:1875px;top:934px">request=6(PTRACE_POKEDATA) pid=118159(top)</div>
<div class="m" style="left:131px;top:970px">29819</div>
<div class="m" style="left:230px;top:970px">4.323468448</div>
<div class="m" style="left:448px;top:970px">ptrace</div>
<div class="m" style="left:768px;top:970px">&lt;</div>
<div class="m" style="left:830px;top:970px">sharky</div>
<div class="m" style="left:1004px;top:970px">118261</div>
<div class="m" style="left:1773px;top:970px">host</div>
<div class="m" style="left:1875px;top:970px">res=0 addr=7FC29A088000 data=6F732F746F6F722F</div>
<div class="m" style="left:131px;top:1006px">29820</div>
<div class="m" style="left:230px;top:1006px">4.323470657</div>
<div class="m" style="left:448px;top:1006px">ptrace</div>
<div class="m" style="left:768px;top:1006px">&gt;</div>
<div class="m" style="left:830px;top:1006px">sharky</div>
<div class="m" style="left:1004px;top:1006px">118261</div>
<div class="m" style="left:1773px;top:1006px">host</div>
<div class="m" style="left:1875px;top:1006px">request=6(PTRACE_POKEDATA) pid=118159(top)</div>
<div class="m" style="left:131px;top:1042px">29821</div>
<div class="m" style="left:230px;top:1042px">4.323472356</div>
<div class="m" style="left:448px;top:1042px">ptrace</div>
<div class="m" style="left:768px;top:1042px">&lt;</div>
<div class="m" style="left:830px;top:1042px">sharky</div>
<div class="m" style="left:1004px;top:1042px">118261</div>
<div class="m" style="left:1773px;top:1042px">host</div>
<div class="m" style="left:1875px;top:1042px">res=0 addr=7FC29A088008 data=697463656A6E695F</div>
</div>
<div class="a" style="left:1974px;top:353px;width:789px;height:1025px;border:6px solid #e9402a"></div>
<div class="a" style="left:2986px;top:257px;width:62px;height:1121px;background:#191919;border-left:1.5px solid #555;border-right:1.5px solid #555;overflow:hidden"><div class="a" style="left:0;top:0.7px;width:60px;height:1.9px;background:#8fe04a"></div><div class="a" style="left:0;top:17.0px;width:60px;height:3.0px;background:#e06a50"></div><div class="a" style="left:0;top:20.0px;width:60px;height:4.6px;background:#7a5c38"></div><div class="a" style="left:0;top:36.0px;width:60px;height:6.0px;background:#6c6c6c"></div><div class="a" style="left:0;top:42.0px;width:60px;height:5.0px;background:#7a5c38"></div><div class="a" style="left:0;top:47.0px;width:60px;height:6.0px;background:#efd19e"></div><div class="a" style="left:0;top:79.7px;width:60px;height:5.8px;background:#6c6c6c"></div><div class="a" style="left:0;top:85.5px;width:60px;height:5.5px;background:#7a5c38"></div><div class="a" style="left:0;top:91.0px;width:60px;height:11.0px;background:#efd19e"></div><div class="a" style="left:0;top:106.7px;width:60px;height:5.8px;background:#efd19e"></div><div class="a" style="left:0;top:139.0px;width:60px;height:6.0px;background:#6c6c6c"></div><div class="a" style="left:0;top:232.7px;width:60px;height:6.3px;background:#7a5c38"></div><div class="a" style="left:0;top:249.0px;width:60px;height:17.0px;background:#efd19e"></div><div class="a" style="left:0;top:266.0px;width:60px;height:5.0px;background:#6c6c6c"></div><div class="a" style="left:0;top:320.5px;width:60px;height:5.5px;background:#7a5c38"></div><div class="a" style="left:0;top:332.0px;width:60px;height:11.0px;background:#efd19e"></div><div class="a" style="left:0;top:343.0px;width:60px;height:4.5px;background:#6c6c6c"></div><div class="a" style="left:0;top:347.5px;width:60px;height:10.5px;background:#5566c8"></div><div class="a" style="left:0;top:358.0px;width:60px;height:7.0px;background:#5fcfc8"></div><div class="a" style="left:0;top:370.0px;width:60px;height:5.6px;background:#6c6c6c"></div><div class="a" style="left:0;top:380.0px;width:60px;height:12.0px;background:#5566c8"></div><div class="a" style="left:0;top:392.0px;width:60px;height:5.6px;background:#5fcfc8"></div><div class="a" style="left:0;top:402.6px;width:60px;height:5.8px;background:#6c6c6c"></div><div class="a" style="left:0;top:408.4px;width:60px;height:5.4px;background:#7a5c38"></div><div class="a" style="left:0;top:413.8px;width:60px;height:5.0px;background:#ebbf94"></div><div class="a" style="left:0;top:451.6px;width:60px;height:5.8px;background:#7a5c38"></div><div class="a" style="left:0;top:469.0px;width:60px;height:59.6px;background:#efd19e"></div><div class="a" style="left:0;top:537.0px;width:60px;height:6.0px;background:#6c6c6c"></div><div class="a" style="left:0;top:543.0px;width:60px;height:5.0px;background:#7a5c38"></div><div class="a" style="left:0;top:558.7px;width:60px;height:3.3px;background:#efd19e"></div><div class="a" style="left:0;top:567.0px;width:60px;height:8.6px;background:#efd19e"></div><div class="a" style="left:0;top:575.6px;width:60px;height:5.1px;background:#6c6c6c"></div><div class="a" style="left:0;top:586.4px;width:60px;height:2.6px;background:#3c5a9a"></div><div class="a" style="left:0;top:767.0px;width:60px;height:10.8px;background:#5566c8"></div><div class="a" style="left:0;top:777.8px;width:60px;height:5.8px;background:#5fcfc8"></div><div class="a" style="left:0;top:789.0px;width:60px;height:5.4px;background:#6c6c6c"></div><div class="a" style="left:0;top:802.8px;width:60px;height:10.8px;background:#5566c8"></div><div class="a" style="left:0;top:813.6px;width:60px;height:5.8px;background:#5fcfc8"></div><div class="a" style="left:0;top:824.8px;width:60px;height:5.4px;background:#6c6c6c"></div><div class="a" style="left:0;top:838.6px;width:60px;height:10.8px;background:#5566c8"></div><div class="a" style="left:0;top:849.4px;width:60px;height:5.8px;background:#5fcfc8"></div><div class="a" style="left:0;top:860.6px;width:60px;height:5.4px;background:#6c6c6c"></div><div class="a" style="left:0;top:874.4px;width:60px;height:10.8px;background:#5566c8"></div><div class="a" style="left:0;top:885.2px;width:60px;height:5.8px;background:#5fcfc8"></div><div class="a" style="left:0;top:896.4px;width:60px;height:5.4px;background:#6c6c6c"></div><div class="a" style="left:0;top:910.2px;width:60px;height:10.8px;background:#5566c8"></div><div class="a" style="left:0;top:921.0px;width:60px;height:5.8px;background:#5fcfc8"></div><div class="a" style="left:0;top:932.2px;width:60px;height:5.4px;background:#6c6c6c"></div><div class="a" style="left:0;top:946.0px;width:60px;height:10.8px;background:#5566c8"></div><div class="a" style="left:0;top:956.8px;width:60px;height:5.8px;background:#5fcfc8"></div><div class="a" style="left:0;top:968.0px;width:60px;height:5.4px;background:#6c6c6c"></div><div class="a" style="left:0;top:981.8px;width:60px;height:10.8px;background:#5566c8"></div><div class="a" style="left:0;top:992.6px;width:60px;height:5.8px;background:#5fcfc8"></div><div class="a" style="left:0;top:1003.8px;width:60px;height:5.4px;background:#6c6c6c"></div><div class="a" style="left:0;top:1017.6px;width:60px;height:10.8px;background:#5566c8"></div><div class="a" style="left:0;top:1028.4px;width:60px;height:5.8px;background:#5fcfc8"></div><div class="a" style="left:0;top:1039.6px;width:60px;height:5.4px;background:#6c6c6c"></div><div class="a" style="left:0;top:1053.4px;width:60px;height:10.8px;background:#5566c8"></div><div class="a" style="left:0;top:1064.2px;width:60px;height:5.8px;background:#5fcfc8"></div><div class="a" style="left:0;top:1075.4px;width:60px;height:5.4px;background:#6c6c6c"></div><div class="a" style="left:0;top:1089.2px;width:60px;height:10.8px;background:#5566c8"></div><div class="a" style="left:0;top:1100.0px;width:60px;height:5.8px;background:#5fcfc8"></div><div class="a" style="left:0;top:1111.2px;width:60px;height:5.4px;background:#6c6c6c"></div></div>
<div class="a" style="left:3048px;top:257px;width:31px;height:1121px;background:#2b2b2b"></div>
<div class="a" style="left:3056px;top:840px;width:16px;height:79px;border-radius:8px;background:#8e8e8e"></div>
<div class="a" style="left:112px;top:1378px;width:2874px;height:30px;background:#4b4b4b"></div>
<div class="a" style="left:112px;top:1377px;width:2874px;height:1.5px;background:#5a5a5a"></div>
<div class="a" style="left:119px;top:1386px;width:1868px;height:16px;border-radius:8px;background:#e4e4e4"></div>
<div class="a" style="left:2986px;top:1378px;width:93px;height:30px;background:#191919;border-top:2px solid #cfcfcf;border-left:2px solid #cfcfcf"></div>
<div class="a" style="left:112px;top:1408px;width:2967px;height:17px;background:#2a2a2a;border-top:1.5px solid #1a1a1a"></div>
<div class="a" style="left:1590px;top:1411px;width:12px;height:12px;border-radius:50%;background:#565656"></div>
<div class="a" style="left:112px;top:1425px;width:1444px;height:461px;background:#171717;overflow:hidden">
<div class="a" style="left:42px;top:0;width:1402px;height:72.5px;background:#333333"></div>
<div class="a" style="left:0;top:324.5px;width:1444px;height:36px;background:#333333"></div>
<div class="m" style="left:52px;top:1px;color:#e2e2e2">System Event 29785: 40 bytes</div>
<svg class="a" style="left:8px;top:0px" width="30" height="36"><path d="M13.5,11.5 L20.5,18.5 L13.5,25.5" fill="none" stroke="#8e8e8e" stroke-width="2.6"/></svg>
<div class="m" style="left:52px;top:37px;color:#e2e2e2">Sysdig Event</div>
<svg class="a" style="left:8px;top:36px" width="30" height="36"><path d="M8.3,15.8 L15,22.6 L21.7,15.8" fill="none" stroke="#8e8e8e" stroke-width="2.6"/></svg>
<div class="m" style="left:92px;top:73px;color:#e2e2e2">CPU ID: 0</div>
<div class="m" style="left:92px;top:109px;color:#e2e2e2">Thread ID: 118261</div>
<div class="m" style="left:92px;top:145px;color:#e2e2e2">Event length: 40</div>
<div class="m" style="left:92px;top:181px;color:#e2e2e2">Number of parameters: 2</div>
<div class="m" style="left:92px;top:217px;color:#e2e2e2">Event type: ptrace (168)</div>
<svg class="a" style="left:48px;top:216px" width="30" height="36"><path d="M8.3,15.8 L15,22.6 L21.7,15.8" fill="none" stroke="#8e8e8e" stroke-width="2.6"/></svg>
<div class="m" style="left:132px;top:253px;color:#e2e2e2">Parameter lengths: 02000800</div>
<svg class="a" style="left:88px;top:252px" width="30" height="36"><path d="M8.3,15.8 L15,22.6 L21.7,15.8" fill="none" stroke="#8e8e8e" stroke-width="2.6"/></svg>
<div class="m" style="left:172px;top:289px;color:#e2e2e2">Parameter length: 2</div>
<div class="m" style="left:172px;top:325px;color:#ffffff">Parameter length: 8</div>
<div class="m" style="left:132px;top:361px;color:#e2e2e2">request: 0b00</div>
<div class="m" style="left:132px;top:397px;color:#e2e2e2">pid: 118159</div>
<div class="m" style="left:92px;top:433px;color:#e2e2e2">Event name: ptrace</div>
</div>
<div class="a" style="left:1556px;top:1425px;width:30px;height:458px;background:#404040;border-left:1.5px solid #555"></div>
<div class="a" style="left:1564px;top:1432px;width:16px;height:282px;border-radius:8px;background:#cecece"></div>
<div class="a" style="left:1586px;top:1425px;width:17px;height:461px;background:#2a2a2a;border-left:1.5px solid #1c1c1c;border-right:1.5px solid #1c1c1c"></div>
<div class="a" style="left:1589px;top:1649px;width:12px;height:12px;border-radius:50%;background:#555"></div>
<div class="a" style="left:1603px;top:1425px;width:1477px;height:461px;background:#171717"></div>
<div class="a" style="left:1603px;top:1425px;width:95px;height:458px;background:#303030"></div>
<div class="m" style="left:1620px;top:1424px;color:#a9a9a9;-webkit-text-stroke:0.3px">0000</div>
<div class="a" style="left:1712px;top:1425px;width:752px;height:33px;background:#303030"></div>
<div class="a" style="left:1806px;top:1425px;width:78px;height:33px;background:#2d4f7f"></div>
<div class="a" style="left:2510px;top:1425px;width:266px;height:33px;background:#303030"></div>
<div class="a" style="left:2540px;top:1425px;width:32px;height:33px;background:#2d4f7f"></div>
<div class="m" style="left:1713px;top:1424px;color:#dedede;-webkit-text-stroke:0.3px">02 00 <span style="color:#e4ecf8">08 00</span> 0b 00 8f cd  01 00 00 00 00 00 00 00</div>
<div class="a" style="left:2515.5px;top:1438.5px;width:4.5px;height:4.5px;background:#d8d8d8"></div><div class="a" style="left:2531.2px;top:1438.5px;width:4.5px;height:4.5px;background:#d8d8d8"></div><div class="a" style="left:2546.8px;top:1438.5px;width:4.5px;height:4.5px;background:#d8d8d8"></div><div class="a" style="left:2562.4px;top:1438.5px;width:4.5px;height:4.5px;background:#d8d8d8"></div><div class="a" style="left:2578.1px;top:1438.5px;width:4.5px;height:4.5px;background:#d8d8d8"></div><div class="a" style="left:2593.8px;top:1438.5px;width:4.5px;height:4.5px;background:#d8d8d8"></div><div class="a" style="left:2609.4px;top:1438.5px;width:4.5px;height:4.5px;background:#d8d8d8"></div><div class="a" style="left:2625.1px;top:1438.5px;width:4.5px;height:4.5px;background:#d8d8d8"></div><div class="a" style="left:2656.3px;top:1438.5px;width:4.5px;height:4.5px;background:#d8d8d8"></div><div class="a" style="left:2672.0px;top:1438.5px;width:4.5px;height:4.5px;background:#d8d8d8"></div><div class="a" style="left:2687.7px;top:1438.5px;width:4.5px;height:4.5px;background:#d8d8d8"></div><div class="a" style="left:2703.3px;top:1438.5px;width:4.5px;height:4.5px;background:#d8d8d8"></div><div class="a" style="left:2719.0px;top:1438.5px;width:4.5px;height:4.5px;background:#d8d8d8"></div><div class="a" style="left:2734.6px;top:1438.5px;width:4.5px;height:4.5px;background:#d8d8d8"></div><div class="a" style="left:2750.2px;top:1438.5px;width:4.5px;height:4.5px;background:#d8d8d8"></div><div class="a" style="left:2765.9px;top:1438.5px;width:4.5px;height:4.5px;background:#d8d8d8"></div>
<div class="a" style="left:112px;top:1423.5px;width:2968px;height:1.5px;background:#0e0e0e"></div>
<div class="a" style="left:112px;top:1885.5px;width:2968px;height:1.5px;background:#686868"></div>
<div class="a" style="left:112px;top:1887px;width:2968px;height:53px;background:#2d2d2d"></div>
<svg class="a" style="left:120px;top:1890px" width="110" height="45" viewBox="120 1890 110 45"><defs><linearGradient id="sbc" x1="0" y1="0" x2="0.4" y2="1"><stop offset="0" stop-color="#d4d5d1"/><stop offset="1" stop-color="#a9aca7"/></linearGradient></defs><circle cx="146" cy="1912" r="12.6" fill="url(#sbc)" stroke="#596060" stroke-width="2"/><path d="M183.5,1898 L199.5,1898 L204,1902.5 L204,1925.5 L183.5,1925.5 Z" fill="#efefe8"/><rect x="183.5" y="1898" width="16" height="6.8" fill="#3f9ad8"/><path d="M188.5,1904.8 C189,1902 191,1900 193.5,1899.5 C192.5,1901 192.3,1903 192.7,1904.8 Z" fill="#efefe8"/><text x="186" y="1912" font-family="Liberation Mono" font-size="5.5" fill="#b8b8b0">001</text><text x="186" y="1917.5" font-family="Liberation Mono" font-size="5.5" fill="#b8b8b0">001</text><text x="186" y="1923" font-family="Liberation Mono" font-size="5.5" fill="#b8b8b0">01100</text><path d="M208.5,1900.5 L193.5,1915.5" stroke="#555753" stroke-width="5.5" stroke-linecap="butt"/><path d="M207,1899 L210.5,1902.5" stroke="#555753" stroke-width="3" stroke-linecap="round"/><path d="M190,1918.5 L191.8,1912.5 L196.3,1917 Z" fill="#000"/></svg>
<div class="s" style="left:250px;top:1898px;font-size:24px;line-height:30px;color:#ececec;-webkit-text-stroke:0.5px">Parameter length (sysdig.param.len), 2 bytes</div>
<div class="a" style="left:2093px;top:1908.5px;width:11px;height:11px;border-radius:50%;background:#4a4a4a"></div>
<div class="s" style="left:2127px;top:1898px;font-size:24px;line-height:30px;color:#ececec;-webkit-text-stroke:0.5px">Events: 92293 · Displayed: 409 (0.4%)</div>
<div class="a" style="left:2859px;top:1908.5px;width:11px;height:11px;border-radius:50%;background:#4a4a4a"></div>
<div class="s" style="left:2892px;top:1898px;font-size:24px;line-height:30px;color:#ececec;-webkit-text-stroke:0.5px">Profile: Default</div>
</div>
<div class="a" style="left:112px;top:76px;width:2968px;height:1864px;border-radius:20px;border:2px solid #585858;border-top-color:#7d7d7d;pointer-events:none"></div>
</body></html>
